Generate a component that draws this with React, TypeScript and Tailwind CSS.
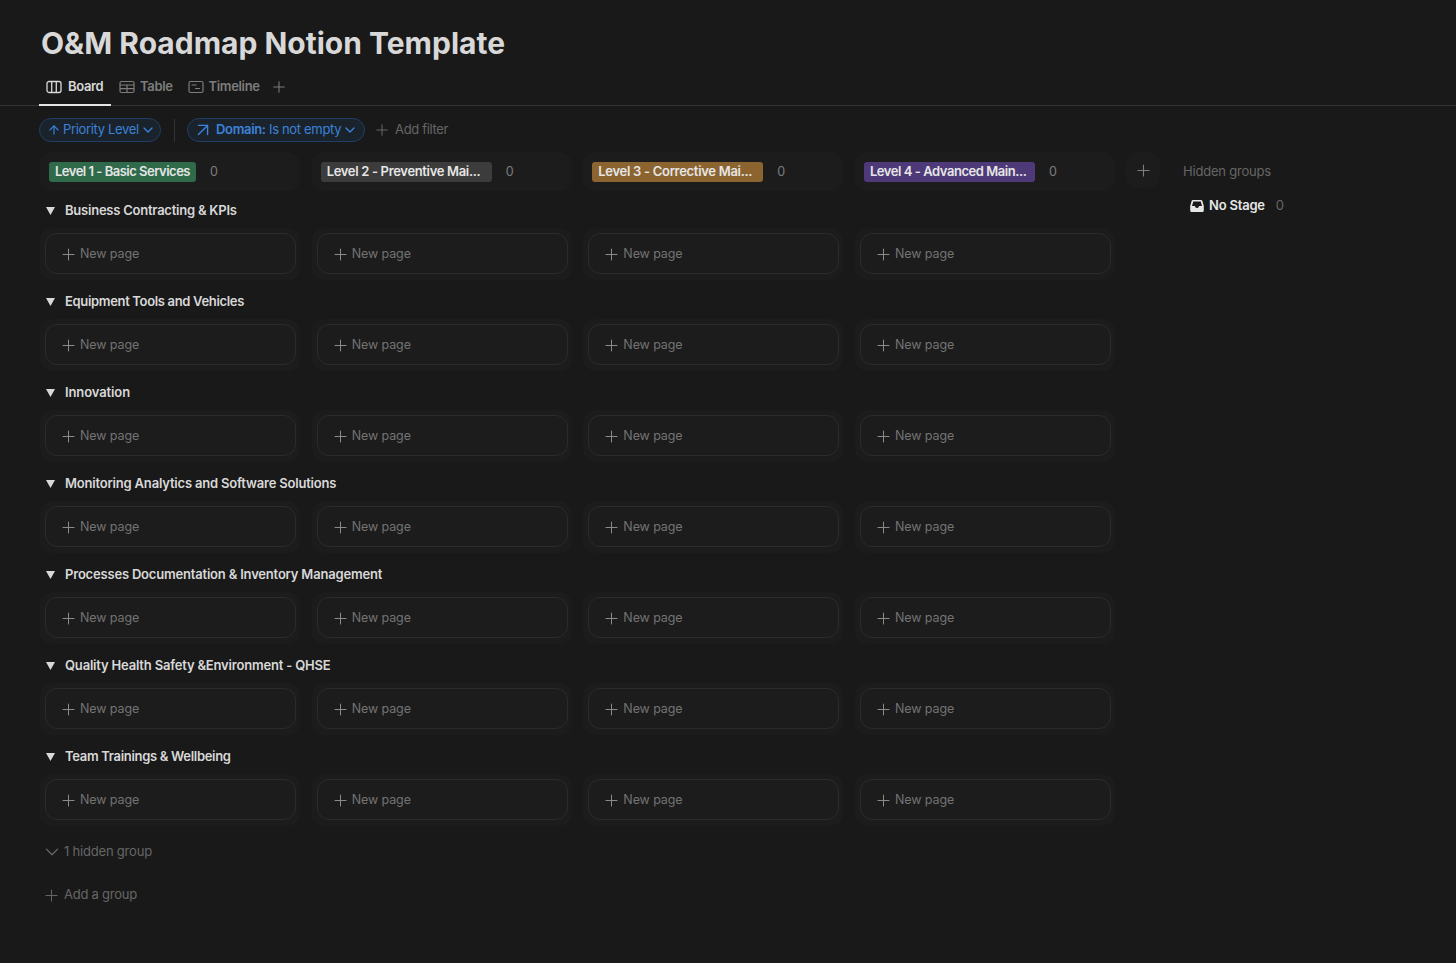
import { ChevronDown, Plus, ArrowUp, ArrowUpRight } from "lucide-react";

const groups = [
  { name: "Business Contracting & KPIs", tracking: "tracking-[-0.23px]" },
  { name: "Equipment Tools and Vehicles", tracking: "tracking-[-0.33px]" },
  { name: "Innovation", tracking: "tracking-[-0.1px]" },
  { name: "Monitoring Analytics and Software Solutions", tracking: "tracking-[-0.19px]" },
  { name: "Processes Documentation & Inventory Management", tracking: "tracking-[-0.19px]" },
  { name: "Quality Health Safety &Environment - QHSE", tracking: "tracking-[-0.19px]" },
  { name: "Team Trainings & Wellbeing", tracking: "tracking-[-0.31px]" },
];

const levels = [
  { name: "Level 1 - Basic Services", width: "w-[147px]", color: "bg-[#2f6b4a]", tracking: "tracking-[-0.5px]" },
  { name: "Level 2 - Preventive Mai...", width: "w-[171px]", color: "bg-[#3c3c3c]", tracking: "tracking-[-0.33px]" },
  { name: "Level 3 - Corrective Mai...", width: "w-[171px]", color: "bg-[#8c6430]", tracking: "tracking-[-0.3px]" },
  { name: "Level 4 - Advanced Main...", width: "w-[171px]", color: "bg-[#4e3a78]", tracking: "tracking-[-0.45px]" },
];

function BoardIcon() {
  return (
    <svg width="16" height="16" viewBox="0 0 16 16" fill="none" stroke="currentColor" strokeWidth="1.3">
      <rect x="1" y="2.500" width="14" height="11" rx="2" />
      <path d="M5.700 2.500v11M10.300 2.500v11" />
    </svg>
  );
}

function TableIcon() {
  return (
    <svg width="16" height="16" viewBox="0 0 16 16" fill="none" stroke="currentColor" strokeWidth="1.200">
      <rect x="1" y="2.500" width="14" height="11" rx="1.500" />
      <path d="M1 6h14M1 9.700h14M8 6v7.500" />
    </svg>
  );
}

function TimelineIcon() {
  return (
    <svg width="16" height="16" viewBox="0 0 16 16" fill="none" stroke="currentColor" strokeWidth="1.2">
      <rect x="1" y="2.500" width="14" height="11" rx="1.500" />
      <path d="M3.500 6h5M7 9.500h5" />
    </svg>
  );
}

function InboxIcon() {
  return (
    <svg width="16" height="16" viewBox="0 0 16 16" fill="currentColor">
      <path d="M4 2h8a1.5 1.5 0 0 1 1.4 1l1.4 5v4.5A1.5 1.5 0 0 1 13.3 14H2.7a1.5 1.5 0 0 1-1.5-1.5V8l1.4-5A1.5 1.5 0 0 1 4 2Zm.3 1.4L3 8h3a2 2 0 0 0 4 0h3l-1.300-4.600H4.300Z" fillRule="evenodd" />
    </svg>
  );
}

function NewPage() {
  return (
    <div className="w-[260px] h-[52px] bg-[#1c1c1c] rounded-xl pl-[5px] pr-[4px] py-[5px]">
      <div className="h-[41px] pt-[1px] border border-[#2b2b2b] rounded-xl flex items-center pl-[13px] gap-[2px] text-[12.500px] tracking-[-0.1px] text-[#737373]">
        <Plus size={19} strokeWidth={1.3} className="text-[#8a8a8a]" />
        New page
      </div>
    </div>
  );
}

export default function App() {
  return (
    <div className="w-[1456px] h-[963px] overflow-hidden bg-[#191919] text-[#d4d4d4] font-['Inter',sans-serif]">
      <h1 className="pl-[41px] pt-[24px] h-[69px] text-[30px] leading-[38px] font-bold text-[#d8d8d8]">
        O&amp;M Roadmap Notion Template
      </h1>

      {/* Tabs */}
      <div className="h-[37px] pl-[39px] flex border-b border-[#333333] text-[13px] tracking-[-0.35px] font-semibold text-[#7d7d7d]">
        <div className="h-[37px] w-[72px] border-b-2 border-[#e6e6e6] flex items-center pl-[7px] gap-[6px] text-[#d8d8d8]">
          <BoardIcon />
          Board
        </div>
        <div className="flex items-center gap-[5px] ml-[8px] h-[35px]">
          <TableIcon />
          Table
        </div>
        <div className="flex items-center gap-[5px] ml-[15px] h-[35px]">
          <TimelineIcon />
          Timeline
        </div>
        <div className="flex items-center ml-[10px] h-[35px]">
          <Plus size={18} strokeWidth={1.4} />
        </div>
      </div>

      {/* Filters */}
      <div className="h-[46px] pt-[2px] pl-[39px] flex items-center text-[13px] tracking-[-0.33px]">
        <div className="h-[24px] w-[122px] rounded-full border border-[#1f3f66] bg-[#1a222c] text-[#3c82d8] flex items-center pl-[7px] gap-[2px]">
          <ArrowUp size={14} />
          Priority Level
          <ChevronDown size={16} strokeWidth={2} className="-ml-[1px]" />
        </div>
        <div className="w-px h-[23px] bg-[#333333] ml-[13px] mr-[12px]" />
        <div className="h-[24px] w-[178px] rounded-full border border-[#1f3f66] bg-[#1a222c] text-[#3c82d8] flex items-center pl-[4px] gap-[1px]">
          <ArrowUpRight size={22} strokeWidth={1.5} />
          <span className="ml-[1px]"><span className="font-semibold">Domain:</span> Is not empty</span>
          <ChevronDown size={16} strokeWidth={2} />
        </div>
        <div className="flex items-center gap-[4px] ml-[8px] text-[#666666]">
          <Plus size={18} strokeWidth={1.4} />
          Add filter
        </div>
      </div>

      <div className="flex pl-[40px]">
        <div className="w-[1076px]">
          {/* Column headers */}
          <div className="flex gap-[11.67px] h-[39px]">
            {levels.map((l) => (
              <div key={l.name} className="w-[260px] h-[39px] rounded-xl bg-[#1c1c1c] flex items-center pl-[9px]">
                <div className={`${l.width} ${l.color} ${l.tracking} h-[20px] rounded-[3px] pl-[6px] flex items-center text-[13px] font-semibold text-[#e6e6e6] whitespace-nowrap`}>
                  {l.name}
                </div>
                <span className="ml-[14px] pt-[1px] text-[12.500px] text-[#7d7d7d]">0</span>
              </div>
            ))}
          </div>

          {/* Groups */}
          <div className="mt-[-1px]">
            {groups.map((g) => (
              <div key={g.name} className="h-[91px]">
                <div className={`${g.tracking} h-[38px] pt-[4px] flex items-center pl-[6px] gap-[10px] text-[13px] font-semibold text-[#d8d8d8]`}>
                  <svg width="9" height="8" viewBox="0 0 9 8" fill="currentColor">
                    <path d="M0 0h9L4.500 8Z" />
                  </svg>
                  {g.name}
                </div>
                <div className="flex gap-[11.67px]">
                  <NewPage />
                  <NewPage />
                  <NewPage />
                  <NewPage />
                </div>
              </div>
            ))}
          </div>

          <div className="flex items-center gap-[1px] pl-[1px] mt-[13px] h-[24px] text-[13px] tracking-[-0.2px] text-[#666666]">
            <ChevronDown size={22} strokeWidth={1.3} />
            1 hidden group
          </div>
          <div className="flex items-center gap-[3px] pl-[2px] mt-[19px] h-[24px] text-[13px] tracking-[-0.25px] text-[#666666]">
            <Plus size={19} strokeWidth={1.3} />
            Add a group
          </div>
        </div>

        {/* Hidden groups */}
        <div className="ml-[10px] flex items-start">
          <div className="w-[34px] h-[36px] rounded-xl bg-[#1c1c1c] flex items-center justify-center text-[#7d7d7d]">
            <Plus size={19} strokeWidth={1.4} />
          </div>
          <div className="ml-[23px] text-[13px] tracking-[-0.2px]">
            <div className="h-[40px] flex items-center text-[#666666]">Hidden groups</div>
            <div className="flex items-center mt-[-1px] ml-[6px] gap-[4px] font-semibold text-[#e6e6e6] h-[30px]">
              <InboxIcon />
              No Stage
              <span className="ml-[7px] font-normal text-[#666666]">0</span>
            </div>
          </div>
        </div>
      </div>
    </div>
  );
}
